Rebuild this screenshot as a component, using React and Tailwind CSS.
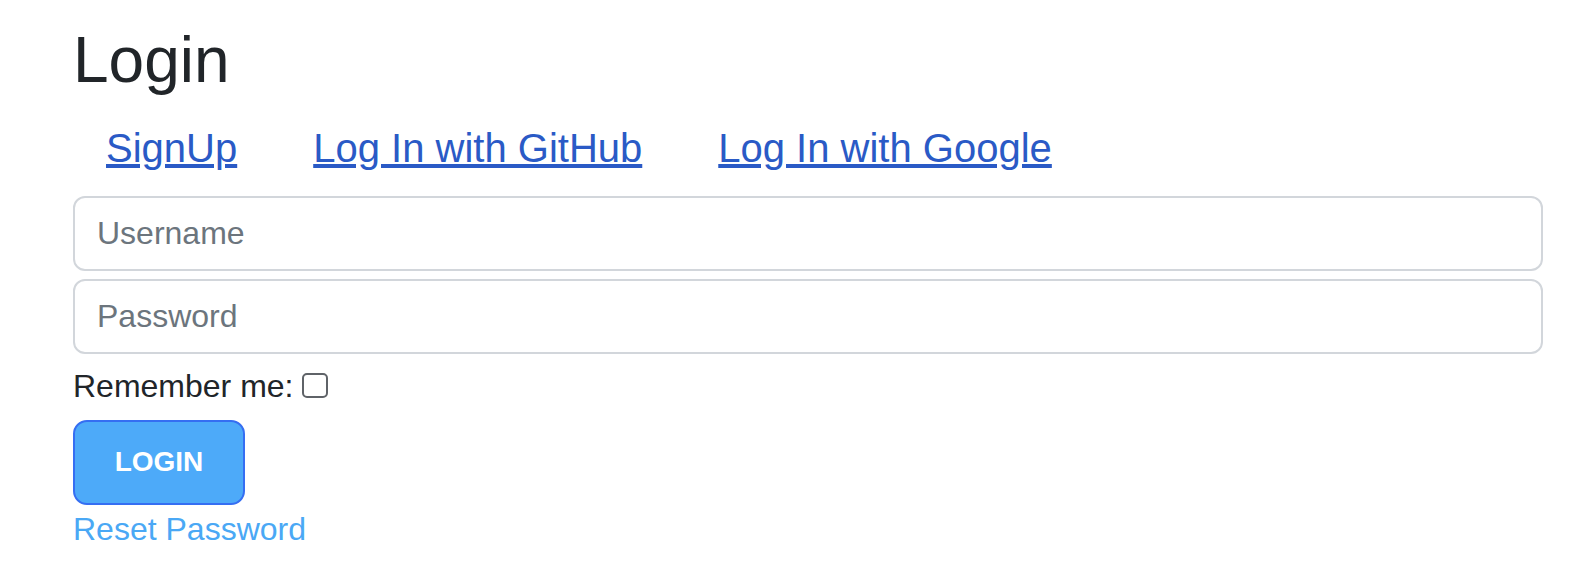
import React from "react";

export default function App() {
  return (
    <div className="min-h-screen bg-white font-['Liberation_Sans',Arial,sans-serif] text-[#212529] pl-[73px] pr-[31px]">
      <h1 className="pt-[22px] text-[64px] leading-[1.2] font-normal">Login</h1>
      <div className="mt-[19px] flex gap-[76px] pl-[33px] text-[40px] leading-[1.5]">
        <a href="#" className="text-[#2a5ac6] underline">SignUp</a>
        <a href="#" className="text-[#2a5ac6] underline">Log In with GitHub</a>
        <a href="#" className="text-[#2a5ac6] underline">Log In with Google</a>
      </div>
      <form className="mt-[18px] flex flex-col" onSubmit={(e) => e.preventDefault()}>
        <div className="flex flex-col gap-2">
          <input
            type="text"
            placeholder="Username"
            className="h-[75px] w-full rounded-[12px] border-2 border-[#d2d6db] bg-white px-[22px] text-[32px] leading-[1.5] text-[#212529] outline-none placeholder:text-[#6c757d]"
          />
          <input
            type="password"
            placeholder="Password"
            className="h-[75px] w-full rounded-[12px] border-2 border-[#d2d6db] bg-white px-[22px] text-[32px] leading-[1.5] text-[#212529] outline-none placeholder:text-[#6c757d]"
          />
        </div>
        <label className="mt-[8px] flex items-center text-[32px] leading-[1.5] text-[#212529]">
          <span>Remember me:</span>
          <input
            type="checkbox"
            className="ml-[8px] h-[25px] w-[26px] appearance-none rounded-[5px] border-2 border-[#5f6368] bg-white"
          />
        </label>
        <div className="mt-[10px]">
          <button
            type="submit"
            className="flex h-[85px] w-[172px] items-center justify-center rounded-[14px] border-2 border-[#356ef2] bg-[#4daaf9] text-[28px] font-bold text-white"
          >
            LOGIN
          </button>
        </div>
        <a href="#" className="self-start text-[32px] leading-[1.5] text-[#4aa8f5]">
          Reset Password
        </a>
      </form>
    </div>
  );
}
